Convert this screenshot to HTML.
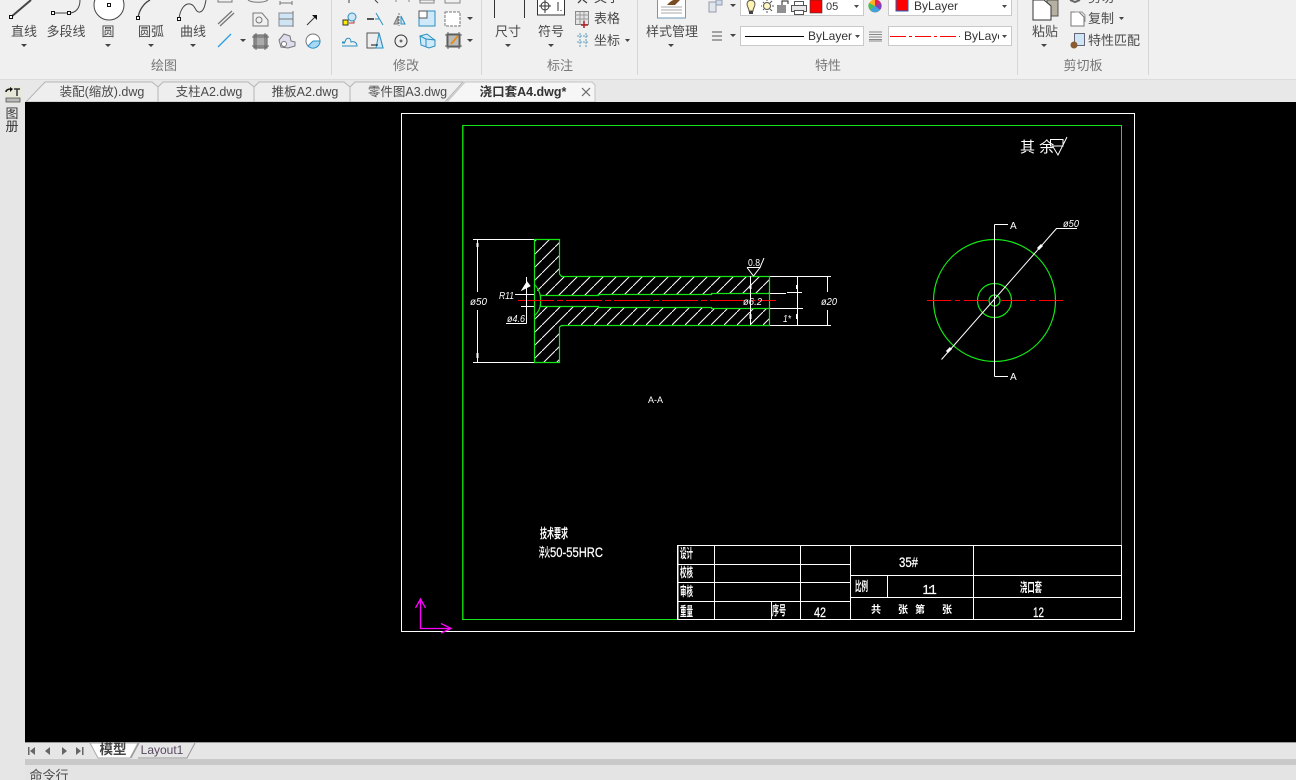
<!DOCTYPE html>
<html><head><meta charset="utf-8"><style>
html,body{margin:0;padding:0;width:1296px;height:780px;overflow:hidden;background:#f0f0f0}
svg{display:block;font-family:"Liberation Sans","Noto Sans CJK SC",sans-serif}
.l{font-size:13px;fill:#4a4a4a;text-anchor:middle}
.g{font-size:13px;fill:#777;text-anchor:middle}
.t{font-size:12.5px;fill:#4a4a4a;text-anchor:middle}
.cad{font-family:"Liberation Sans","Noto Sans CJK SC",sans-serif;fill:#fff}
.i{font-style:italic;font-size:10px}
.tb{font-size:13px;font-weight:bold}
.n{font-size:14px;stroke:#fff;stroke-width:.25px}
</style></head><body>
<svg width="1296" height="780" viewBox="0 0 1296 780" xmlns="http://www.w3.org/2000/svg">
<defs>
<pattern id="h" patternUnits="userSpaceOnUse" width="13" height="13" patternTransform="translate(9,0)"><path d="M-1 14L14 -1" stroke="#fff" stroke-width="1" fill="none"/></pattern>
<clipPath id="c4"><rect x="888" y="26" width="111" height="20"/></clipPath>
</defs>
<rect width="1296" height="780" fill="#f0f0f0"/>
<!-- separators -->
<g stroke="#d6d6d6"><path d="M331.5 0V75M481.5 0V75M637.5 0V75M1017.5 0V75M1148.5 0V75"/></g>
<rect x="0" y="79" width="1296" height="1" fill="#dcdcdc"/>
<rect x="0" y="80" width="1296" height="22" fill="#e8e8e8"/>
<rect x="0" y="102" width="25" height="678" fill="#e6e6e6"/>
<!-- draw big icons -->
<g fill="none" stroke="#444">
<path d="M11 17L31 0" stroke-width="2"/><rect x="9.5" y="15.5" width="3" height="3" fill="#fff" stroke="#111"/>
<path d="M53 13H69M69 13C76 13 80 8 80 0" stroke-width="1"/><rect x="51.5" y="11.5" width="3" height="3" fill="#fff" stroke="#111"/><rect x="67.5" y="11.5" width="3" height="3" fill="#fff" stroke="#111"/>
<circle cx="109" cy="5" r="15" fill="#fff"/><rect x="107.5" y="3.5" width="3" height="3" fill="#fff" stroke="#111"/>
<path d="M138 18C139 10 144 3 150 0" stroke-width="1.300"/><rect x="136.5" y="16.5" width="3" height="3" fill="#fff" stroke="#111"/>
<path d="M179 19C180 9 185 3 190 4C196 5 195 13 200 12C204 11 205 5 206 0"/><rect x="177.5" y="17.5" width="3" height="3" fill="#fff" stroke="#111"/>
</g>
<g class="l" style="font-size:13px">
<text class="l" x="24" y="36">直线</text><text class="l" x="66" y="36">多段线</text><text class="l" x="108" y="36">圆</text><text class="l" x="151" y="36">圆弧</text><text class="l" x="193" y="36">曲线</text>
<text class="l" x="508" y="36">尺寸</text><text class="l" x="551" y="36">符号</text><text class="l" x="672" y="36">样式管理</text><text class="l" x="1045" y="36">粘贴</text>
<text class="l" x="607" y="23">表格</text><text class="l" x="607" y="45">坐标</text>
<text class="l" x="1101" y="23">复制</text><text class="l" x="1114" y="45">特性匹配</text>
<text class="l" x="607" y="2">文字</text><text class="l" x="1101" y="2">剪切</text>
</g>
<g class="g"><text class="g" x="164" y="70">绘图</text><text class="g" x="406" y="70">修改</text><text class="g" x="560" y="70">标注</text><text class="g" x="828" y="70">特性</text><text class="g" x="1083" y="70">剪切板</text></g>
<!-- small arrows -->
<g fill="#444">
<path d="M21 44h6l-3 3zM105 44h6l-3 3zM148 44h6l-3 3zM190 44h6l-3 3zM505 44h6l-3 3zM548 44h6l-3 3zM668 44h6l-3 3zM1041 44h6l-3 3z"/>
<path d="M240 39h6l-3 3zM467 17h6l-3 3zM467 39h6l-3 3zM625 39h5l-2.500 3zM730 4h6l-3 3zM730 34h6l-3 3zM1119 17h5l-2.500 3z"/>
</g>
<!-- draw small icons -->
<g fill="none" stroke="#777">
<path d="M218 0V2H232V0M248 0C252 3 264 3 268 0M280 3H292M280 1V5M292 1V5" />
<path d="M218 24L232 11M220 26L234 13" stroke-width="1.3"/>
<path d="M253 13H262L268 20V26H253Z" /><circle cx="259" cy="20" r="3"/>
<rect x="279" y="13" width="14" height="13" fill="#cfe4f5" stroke="#889"/><path d="M293 11V27M279 19H293"/>
<path d="M307 25L316 16" stroke="#333"/><path d="M312 15h5v5z" fill="#111" stroke="none"/>
<path d="M218 47L231 34" stroke="#2aa0e0" stroke-width="1.300"/>
<rect x="254" y="35" width="13" height="13" fill="#aaa" stroke="#555"/><path d="M252 37H269M252 46H269M256 33V50M265 33V50" stroke="#666"/>
<path d="M279 40L284 34L290 36L291 41L295 42V46L288 48L281 47Z" fill="#dde" /><circle cx="284" cy="44" r="2.500" fill="#fff"/>
<circle cx="313" cy="41" r="7" fill="#fff"/><path d="M313 41H320A7 7 0 0 1 308 46L313 41" fill="#a8d8f5" stroke="#2a90c0"/>
<!-- modify -->
<path d="M349 0V3M375 0L378 3" stroke="#444"/>
<circle cx="352" cy="17" r="4" fill="#cfe4f5" stroke="#2a90c0"/><rect x="343" y="20" width="5" height="5" fill="#fe0" stroke="#333"/><path d="M349 23H354V21" stroke="#b33"/>
<path d="M367 19H374" stroke="#555" stroke-width="2"/><path d="M375 19H379M376 13L383 25" stroke="#2a90c0"/>
<path d="M399 13V26" stroke="#777" stroke-dasharray="2 1"/><path d="M398 16L394 24H398Z" fill="#bbb"/><path d="M401 16L405 24H401Z" fill="#cfe4f5" stroke="#2a90c0"/>
<rect x="419" y="11" width="16" height="15" fill="#cfe8fa" stroke="#2a90c0"/><rect x="419" y="11" width="8" height="7" fill="#fff" stroke="#555"/>
<rect x="445" y="12" width="15" height="14" fill="#fff" stroke="#777" stroke-dasharray="3 1"/>
<path d="M342 46H357C357 42 353 41 351 42C351 37 346 37 345 42H342" stroke="#2a90c0"/><path d="M342 43H345" stroke="#2a90c0"/>
<path d="M367 33H379L383 48H367Z" fill="#eee" stroke="#555"/><path d="M379 33L383 48H376Z" fill="#cfe8fa" stroke="#2a90c0"/><path d="M371 45H378" stroke="#111"/>
<circle cx="401" cy="41" r="6" stroke="#333"/><circle cx="401" cy="41" r="1" fill="#333"/>
<path d="M420 36L427 34L432 38L435 40V46L429 48L421 45Z" fill="#cfe8fa" stroke="#2a90c0"/><path d="M426 39V47M420 36L426 39L435 40"  stroke="#2a90c0"/>
<rect x="447" y="34" width="13" height="13" fill="#bbb" stroke="#555"/><path d="M445 35H462M445 46H462M448 32V49M459 32V49" stroke="#666"/><path d="M451 44L458 36" stroke="#e09020" stroke-width="2"/>
<path d="M396 0V2M409 0V2M420 0V3H434V0M419 0H435M445 0V3H460V0" stroke="#888"/>
<!-- annotation -->
<path d="M494.500 0V18M524.500 0V18" stroke="#333"/>
<rect x="537.500" y="-2" width="27" height="17" fill="#fff" stroke="#333"/><circle cx="545" cy="6" r="4" stroke="#333"/><path d="M545 0V13M539 6H551M558 2V11M561 10V11" stroke="#333"/>
<path d="M581 0L578 3M583 0L587 3" stroke="#444" stroke-width="1.300"/>
<rect x="575.500" y="11.500" width="13" height="13" fill="#e4e4e4" stroke="#888"/><path d="M575 15H589M580 12V24M584 12V24M575 19H589" stroke="#999"/><path d="M584 21V28M581 25H588" stroke="#b02020" stroke-width="1.500"/>
<path d="M577 36H589M577 42H589M580 33V47M586 33V47" stroke="#5a9ac0" stroke-dasharray="2 1"/>
<!-- style -->
<rect x="657.500" y="-4" width="28" height="22" fill="#fff" stroke="#6a9ab5"/><path d="M661 7H682M661 10H682M661 13H682" stroke="#aaa"/><path d="M667 5C672 -1 676 -1 680 0L675 5Z" fill="#7a4a20" stroke="none"/>
<rect x="709" y="2" width="7" height="10" fill="#dfe6ee" stroke="#99a"/><rect x="716" y="0" width="6" height="5" fill="#cde" stroke="#99a"/>
<path d="M712 32H722M712 36H722M712 40H722" stroke="#555"/>
</g>
<!-- boxes -->
<g fill="#fff" stroke="#c9c9c9"><rect x="740.500" y="-5" width="123" height="20.500"/><rect x="888.500" y="-5" width="123" height="20.500"/><rect x="740.500" y="26.500" width="123" height="19"/><rect x="888.500" y="26.500" width="123" height="19"/></g>
<g fill="#4a4a4a"><path d="M854 5h5l-2.500 3zM1002 5h5l-2.500 3zM855 35h5l-2.500 3zM1002 35h5l-2.500 3z"/></g>
<path d="M747 4C747 -1 755 -1 755 4C755 7 753 8 753 11H749C749 8 747 7 747 4Z" fill="#fff3b0" stroke="#555"/><rect x="749" y="11" width="4" height="3" fill="#444"/>
<circle cx="767" cy="6" r="3.500" fill="#fff6c0" stroke="#555"/><path d="M767 0V1M767 11V13M761 6H762M772 6H774M763 2L764 3M770 9L772 11M763 10L764 9M770 3L772 1" stroke="#555"/>
<path d="M777 6H786M777 8H786M777 10H786M777 12H786" stroke="#222"/><path d="M782 5V1H788V4" fill="none" stroke="#222"/>
<rect x="791.500" y="5.500" width="15" height="6" fill="#e8e8e8" stroke="#555"/><rect x="794.500" y="1.500" width="9" height="4" fill="#fff" stroke="#555"/><rect x="794.500" y="10.500" width="9" height="4" fill="#fff" stroke="#555"/>
<rect x="810" y="0" width="12" height="13" fill="#f00" stroke="#333" stroke-width=".6"/>
<text x="826" y="10" style="font-size:11px" fill="#333">05</text>
<circle cx="875" cy="6" r="6.500" fill="#ffb020"/><path d="M875 6L875 -.5A6.500 6.500 0 0 1 881 3Z" fill="#e02060"/><path d="M875 6L881 3A6.500 6.500 0 0 1 880 10Z" fill="#8040c0"/><path d="M875 6L880 10A6.500 6.500 0 0 1 870 10Z" fill="#40a0e0"/><path d="M875 6L870 10A6.500 6.500 0 0 1 869 3Z" fill="#40c060"/>
<rect x="896" y="-1" width="12" height="12" fill="#f00" stroke="#2060c0"/>
<text x="914" y="10" style="font-size:12px" fill="#333">ByLayer</text>
<path d="M745 36.500H804" stroke="#000"/>
<text x="808" y="40" style="font-size:12px" fill="#333">ByLayer</text>
<path d="M869 32H882M869 34.500H882M869 37H882M869 39.500H882M869 41H882" stroke="#888"/>
<path d="M890 36.500H960" stroke="#f00" stroke-dasharray="16 3 3 3"/>
<text x="964" y="40" style="font-size:12px" fill="#333" clip-path="url(#c4)">ByLayer</text>
<!-- clipboard icons -->
<path d="M1047 0H1058V16H1047Z" fill="#b5b0a0" stroke="#555"/><path d="M1033 0H1044L1051 6V20H1033Z" fill="#fff" stroke="#333"/>
<path d="M1071 12H1079L1084 17V26H1071Z" fill="#fff" stroke="#777"/><path d="M1075 12H1082L1085 15V22" fill="none" stroke="#999"/>
<path d="M1070 0L1075 2L1080 0" fill="none" stroke="#666" stroke-width="2"/>
<rect x="1074.500" y="33.500" width="10" height="12" fill="#cfe4f5" stroke="#667"/><circle cx="1074" cy="45" r="3.500" fill="#8a5a30"/>
<!-- tabs -->
<path d="M26 102L45 82H152L158 87V102Z" fill="#eeeeee" stroke="#b5b5b5"/>
<path d="M158 102V87L163 82H248L254 87V102Z" fill="#eeeeee" stroke="#b5b5b5"/>
<path d="M254 102V87L259 82H344L350 87V102Z" fill="#eeeeee" stroke="#b5b5b5"/>
<path d="M350 102V87L355 82H456L463 82L445 102Z" fill="#eeeeee" stroke="#b5b5b5"/>
<path d="M447 102L465 82H592L595 85V102Z" fill="#f6f6f6" stroke="#c4c4c4"/>
<text class="t" x="102" y="96">装配(缩放).dwg</text><text class="t" x="209" y="96">支柱A2.dwg</text><text class="t" x="305" y="96">推板A2.dwg</text><text class="t" x="407.500" y="96">零件图A3.dwg</text>
<text class="t" x="523" y="96" style="font-weight:bold;fill:#333;font-size:12.500px">浇口套A4.dwg*</text>
<path d="M582 88L590 96M590 88L582 96" stroke="#666" stroke-width="1.200"/>
<!-- sidebar -->
<rect x="5" y="87" width="16" height="16" fill="#e8e8d8"/>
<path d="M6 92C6 90 8 89 11 89" fill="none" stroke="#111" stroke-width="1.500"/><path d="M10 87L13 89L10 92Z" fill="#111"/><path d="M14 89H20M17 89V96" stroke="#333" stroke-width="1.500"/><rect x="6" y="98" width="14" height="4" fill="#bbb" stroke="#444" stroke-width=".7"/>
<text x="12" y="118" style="font-size:13px;text-anchor:middle" fill="#333">图</text>
<text x="12" y="131" style="font-size:13px;text-anchor:middle" fill="#333">册</text>
<!-- canvas -->
<rect x="25" y="102" width="1271" height="641" fill="#000"/>
<g shape-rendering="crispEdges" fill="none">
<rect x="401.500" y="113.500" width="733" height="518" stroke="#fff"/>
<path d="M463 125.500H1121.500V545" stroke="#14e614"/>
<!-- hatch -->
<path fill-rule="evenodd" fill="url(#h)" stroke="none" d="M534 239H560V276H770V325H560V362H534ZM534 284L540 296H599V294H712V293H770V309H712V307H599V306H540L534 316Z"/>
</g>
<path d="M462.800 620V125" stroke="#0ff000" stroke-width="1.300" fill="none"/>
<path d="M462 619.500H678" stroke="#14e614" stroke-width="1" fill="none"/>
<g fill="none" stroke="#14e614" stroke-width="1.200">
<path d="M534.500 239.500H559.500V274L561.500 276.500H769.500V325.500H561.500L559.500 327V362.500H534.500Z"/>
<path d="M540.500 295.500H598.500V294.500H711.500V293.500H769.500M540.500 306.500H598.500V307.500H711.500V308.500H769.500M540.500 295.500V306.500"/>
<path d="M534 284C538 288 540 292 540.500 297M540.500 304C540 309 538 313 534 316"/>
<circle cx="994.500" cy="300.500" r="61"/><circle cx="994.500" cy="300.500" r="17"/><circle cx="994.500" cy="300.500" r="5.500"/>
</g>
<g stroke="#f00" fill="none" shape-rendering="crispEdges" stroke-width="1.300">
<path d="M518 300.500H776" stroke-dasharray="36 3 6 3"/>
<path d="M927 300.500H951M955 300.500H960M964 300.500H988M1001 300.500H1026M1030 300.500H1035M1039 300.500H1063"/>
</g>
<g stroke="#fff" fill="none">
<g shape-rendering="crispEdges">
<path d="M473 239.500H534M473 362.500H534M477.500 240V292M477.500 310V362"/>
<path d="M521 294.500H534M521 306.500H534M526.500 277V323.500M506 323.500H526.500M515 294.500H530"/>
<path d="M770 276.500H831M770 325.500H831M770 293.500H786M787 292.500H802M770 308.500H803M797.500 277V325M827.500 277V292M827.500 310V325M750.500 276V325"/>
<path d="M994.500 224.500V376.500M994.500 224.500H1008M994.500 376.500H1008M1056 228.500H1077"/>
<path d="M678 545.500H1121.500V619.500H678ZM677.500 545V620M714.500 545V620M800.500 545V620M850.500 545V620M973.500 545V620M771.500 601V620M887.500 575V597M1121.500 545V620"/>
<path d="M678 564.500H850M678 582.500H850M678 601.500H850M850 575.500H1122M850 597.500H1122"/>
</g>
<path d="M941.500 359.500L1056.500 228.500"/>
<path d="M747 267.500H760L753.500 276L747 267.500M760 267.500L764 258"/>
<path d="M527 282L530 286L522 290Z" fill="#fff"/>
<path d="M1050.500 139.500H1063V146H1050.500ZM1052.500 146L1058 155L1067 137"/>
<path d="M477.500 243V247M477.500 353V358M797 285V289M797 314V319M750.500 285V289M750.500 314V319" stroke-width="2"/>
<path d="M1038 249L1042 245M947 352L951 348" stroke-width="3"/>
</g>
<g class="cad">
<text class="cad i" x="470" y="305" textLength="17" lengthAdjust="spacingAndGlyphs">ø50</text>
<text class="cad i" x="499" y="299" textLength="15" lengthAdjust="spacingAndGlyphs">R11</text>
<text class="cad i" x="507" y="322" textLength="18" lengthAdjust="spacingAndGlyphs">ø4.6</text>
<text class="cad i" x="743" y="305" textLength="19" lengthAdjust="spacingAndGlyphs">ø6.2</text>
<text class="cad i" x="821" y="305" textLength="16" lengthAdjust="spacingAndGlyphs">ø20</text>
<text class="cad" x="748" y="266" style="font-size:10px" textLength="12" lengthAdjust="spacingAndGlyphs">0.8</text>
<text class="cad i" x="783" y="322" textLength="8" lengthAdjust="spacingAndGlyphs">1*</text>
<text class="cad i" x="1063" y="227" textLength="16" lengthAdjust="spacingAndGlyphs">ø50</text>
<text class="cad" x="1010" y="229" style="font-size:10px">A</text>
<text class="cad" x="1010" y="380" style="font-size:10px">A</text>
<text class="cad" x="1020" y="152" style="font-size:15px">其 余</text>
<text class="cad" x="648" y="403" style="font-size:9px" textLength="15" lengthAdjust="spacingAndGlyphs">A-A</text>
<text class="cad tb" x="540" y="538" textLength="28" lengthAdjust="spacingAndGlyphs">技术要求</text>
<text class="cad tb" x="539" y="557" textLength="11" lengthAdjust="spacingAndGlyphs">淬火</text>
<text class="cad n" x="550" y="557" textLength="53" lengthAdjust="spacingAndGlyphs">50-55HRC</text>
<text class="cad tb" x="680" y="558" textLength="13" lengthAdjust="spacingAndGlyphs">设计</text>
<text class="cad tb" x="680" y="577" textLength="13" lengthAdjust="spacingAndGlyphs">校核</text>
<text class="cad tb" x="680" y="596" textLength="13" lengthAdjust="spacingAndGlyphs">审核</text>
<text class="cad tb" x="680" y="616" textLength="13" lengthAdjust="spacingAndGlyphs">重量</text>
<text class="cad tb" x="772" y="615" textLength="14" lengthAdjust="spacingAndGlyphs">序号</text>
<text class="cad n" x="814" y="617" textLength="12" lengthAdjust="spacingAndGlyphs">42</text>
<text class="cad n" x="899" y="567" textLength="19" lengthAdjust="spacingAndGlyphs">35#</text>
<text class="cad tb" x="855" y="591" textLength="13" lengthAdjust="spacingAndGlyphs">比例</text>
<text class="cad n" x="922.500 928 929.500" y="594" style="font-size:13px">1:1</text>
<text class="cad tb" x="1020" y="592" textLength="22" lengthAdjust="spacingAndGlyphs">浇口套</text>
<text class="cad n" x="1033" y="617" textLength="11" lengthAdjust="spacingAndGlyphs">12</text>
<text class="cad tb" x="871" y="613" style="font-size:10px">共</text><text class="cad tb" x="898" y="613" style="font-size:10px">张</text><text class="cad tb" x="915" y="613" style="font-size:10px">第</text><text class="cad tb" x="942" y="613" style="font-size:10px">张</text>
</g>
<!-- UCS -->
<g stroke="#f0f" fill="none" stroke-width="1.300">
<path d="M420.500 599V628.500H451"/>
<path d="M415.500 608L420.500 599L425.500 608M441 623.500L451 628.500L441 633"/>
</g>
<!-- bottom -->
<rect x="25" y="743" width="1271" height="16" fill="#e6e6e6"/>
<rect x="25" y="742" width="1271" height="1" fill="#999"/>
<rect x="25" y="759" width="1271" height="6" fill="#c9c9c9"/>
<rect x="25" y="765" width="1271" height="15" fill="#e4e4e4"/>
<g fill="#666"><path d="M28 747h1.500v8H28zM35 747v8l-5-4zM50 747v8l-5-4zM62 747v8l5-4zM76 747v8l5-4zM82 747h1.500v8H82z"/></g>
<path d="M90 743L98 758H130L138 743Z" fill="#fff" stroke="#aaa"/>
<text x="113" y="754" style="font-size:13.500px;font-weight:bold;text-anchor:middle" fill="#444">模型</text>
<path d="M131 758L139 743M138 758H187L195 743" fill="none" stroke="#999"/>
<text x="162" y="754" style="font-size:12px;text-anchor:middle" fill="#5a4a60">Layout1</text>
<text x="49" y="780" style="font-size:13px;text-anchor:middle" fill="#4a4a4a">命令行</text>
</svg>
</body></html>
